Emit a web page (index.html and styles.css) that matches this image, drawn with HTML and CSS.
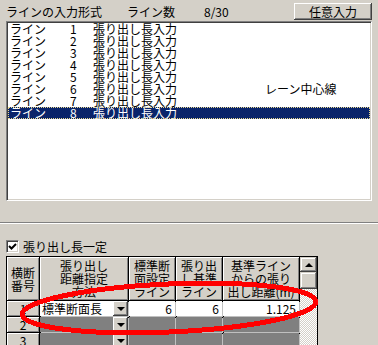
FILE: index.html
```html
<!DOCTYPE html>
<html>
<head>
	<meta charset="utf-8">
	<title>ライン入力</title>
	<link rel="stylesheet" href="styles.css">
</head>
<body>
	<div class="topbar">
		<span class="lbl lbl-form">ラインの入力形式</span>
		<span class="lbl lbl-count">ライン数</span>
		<span class="lbl lbl-num">8/30</span>
		<button class="btn btn-free">任意入力</button>
	</div>

	<div class="listbox">
		<div class="row"><span class="c-name">ライン</span><span class="c-no">1</span><span class="c-type">張り出し長入力</span></div>
		<div class="row"><span class="c-name">ライン</span><span class="c-no">2</span><span class="c-type">張り出し長入力</span></div>
		<div class="row"><span class="c-name">ライン</span><span class="c-no">3</span><span class="c-type">張り出し長入力</span></div>
		<div class="row"><span class="c-name">ライン</span><span class="c-no">4</span><span class="c-type">張り出し長入力</span></div>
		<div class="row"><span class="c-name">ライン</span><span class="c-no">5</span><span class="c-type">張り出し長入力</span></div>
		<div class="row"><span class="c-name">ライン</span><span class="c-no">6</span><span class="c-type">張り出し長入力</span><span class="c-note">レーン中心線</span></div>
		<div class="row"><span class="c-name">ライン</span><span class="c-no">7</span><span class="c-type">張り出し長入力</span></div>
		<div class="row sel"><span class="c-name">ライン</span><span class="c-no">8</span><span class="c-type">張り出し長入力</span></div>
	</div><!-- / listbox -->

	<div class="sep"></div>

	<div class="check">
		<span class="box"><svg width="9" height="9" viewBox="0 0 9 9"><path d="M1 4 L3.5 6.5 L8 2" fill="none" stroke="#000" stroke-width="2"/></svg></span>
		<span>張り出し長一定</span>
	</div>

	<div class="grid">
		<div class="sb">
			<div class="sb-btn"><span class="up"></span></div>
			<div class="sb-thumb"></div>
		</div>

		<div class="hd">横断<br>番号</div>
		<div class="hd">張り出し<br>距離指定<br>方法</div>
		<div class="hd">標準断<br>面設定<br>ライン</div>
		<div class="hd">張り出<br>し基準<br>ライン</div>
		<div class="hd">基準ライン<br>からの張り<br>出し距離(m)</div>

		<div class="rh">1</div>
		<div class="cell combo"><span class="txt">標準断面長</span><span class="dd"><span class="down"></span></span></div>
		<div class="cell num">6</div>
		<div class="cell num">6</div>
		<div class="cell num">1.125</div>

		<div class="rh">2</div>
		<div class="cell combo off"><span class="txt"></span><span class="dd"><span class="down"></span></span></div>
		<div class="cell off"></div>
		<div class="cell off"></div>
		<div class="cell off"></div>

		<div class="rh">3</div>
		<div class="cell combo off"><span class="txt"></span><span class="dd"><span class="down"></span></span></div>
		<div class="cell off"></div>
		<div class="cell off"></div>
		<div class="cell off"></div>
	</div><!-- / grid -->

	<svg class="mark" width="378" height="345" viewBox="0 0 378 345">
		<ellipse cx="169" cy="308" rx="147" ry="24" transform="rotate(-2.5 169 308)" fill="none" stroke="#ff0000" stroke-width="5"/>
	</svg>
</body>
</html>
```

FILE: styles.css
```css
body {
	margin: 0;
	width: 378px;
	height: 345px;
	overflow: hidden;
	position: relative;
	background: #d4d0c8;
	color: #000;
	font-family: "Noto Sans CJK JP", sans-serif;
	font-size: 12px;
	line-height: 13px;
}

.topbar {
	display: flex;
	align-items: flex-start;
	height: 21px;
}
.lbl {
	padding-top: 5px;
	white-space: nowrap;
}
.lbl-form { margin-left: 6px; width: 121px; }
.lbl-count { width: 77px; }
.lbl-num { flex: 1; }

.btn {
	margin: 3px 6px 0 0;
	width: 78px;
	height: 17px;
	padding: 0;
	border: none;
	background: #d4d0c8;
	font: inherit;
	line-height: 15px;
	box-shadow: inset -1px -1px #404040, inset 1px 1px #fff, inset -2px -2px #808080;
}

.listbox {
	margin: 0 6px;
	height: 180px;
	box-sizing: border-box;
	padding: 1px;
	background: #fff;
	border: 1px solid;
	border-color: #808080 #fff #fff #808080;
	box-shadow: inset 1px 1px #404040, inset -1px -1px #d4d0c8;
}
.row {
	display: flex;
	height: 12px;
	line-height: 12px;
	white-space: nowrap;
}
.c-name { padding-left: 2px; width: 60px; }
.c-no { width: 23px; }
.c-type { width: 172px; }
.row.sel {
	background: #0a246a;
	color: #fff;
	outline: 1px dotted #e8d890;
	outline-offset: -1px;
}

.sep {
	margin-top: 21px;
	border-top: 1px solid #808080;
	border-bottom: 1px solid #fff;
}

.check {
	display: flex;
	align-items: center;
	gap: 4px;
	margin: 16px 0 0 6px;
	height: 13px;
}
.box {
	width: 13px;
	height: 13px;
	box-sizing: border-box;
	display: flex;
	align-items: center;
	justify-content: center;
	background: #fff;
	border: 1px solid;
	border-color: #808080 #fff #fff #808080;
	box-shadow: inset 1px 1px #404040, inset -1px -1px #d4d0c8;
}

.grid {
	margin: 3px 0 0 6px;
	width: 312px;
	box-sizing: border-box;
	padding: 1px 1px 0 1px;
	display: grid;
	grid-template-columns: 32px 88px 46px 46px 76px 17px;
	grid-template-rows: 43px 15px 15px 15px;
	gap: 1px;
	background: #000;
}
.hd, .rh {
	background: #d4d0c8;
	box-shadow: inset 1px 1px #fff, inset -1px -1px #808080;
	display: flex;
	align-items: center;
	justify-content: center;
	text-align: center;
	overflow: hidden;
	white-space: nowrap;
}
.rh { line-height: 15px; }

.cell {
	background: #fff;
	box-shadow: 1px 1px 0 #c0c0c0;
	line-height: 15px;
	white-space: nowrap;
}
.cell.off { background: #808080; }
.num {
	text-align: right;
	padding-right: 3px;
}
.combo { display: flex; }
.combo .txt { flex: 1; padding-left: 2px; }
.dd {
	width: 15px;
	height: 15px;
	background: #d4d0c8;
	box-shadow: inset -1px -1px #404040, inset 1px 1px #fff, inset -2px -2px #808080;
	display: flex;
	align-items: center;
	justify-content: center;
}
.down {
	width: 0;
	height: 0;
	border-left: 4px solid transparent;
	border-right: 4px solid transparent;
	border-top: 4px solid #000;
}

.sb {
	grid-column: 6;
	grid-row: 1 / 5;
	background: repeating-conic-gradient(#fff 0 25%, #d4d0c8 0 50%) 0 0 / 2px 2px;
}
.sb-btn, .sb-thumb {
	background: #d4d0c8;
	box-shadow: inset -1px -1px #404040, inset 1px 1px #d4d0c8, inset -2px -2px #808080, inset 2px 2px #fff;
}
.sb-btn {
	height: 15px;
	display: flex;
	align-items: center;
	justify-content: center;
}
.sb-thumb { height: 17px; }
.up {
	width: 0;
	height: 0;
	border-left: 4px solid transparent;
	border-right: 4px solid transparent;
	border-bottom: 4px solid #000;
}

.mark {
	position: absolute;
	left: 0;
	top: 0;
	pointer-events: none;
	shape-rendering: crispEdges;
}
```
